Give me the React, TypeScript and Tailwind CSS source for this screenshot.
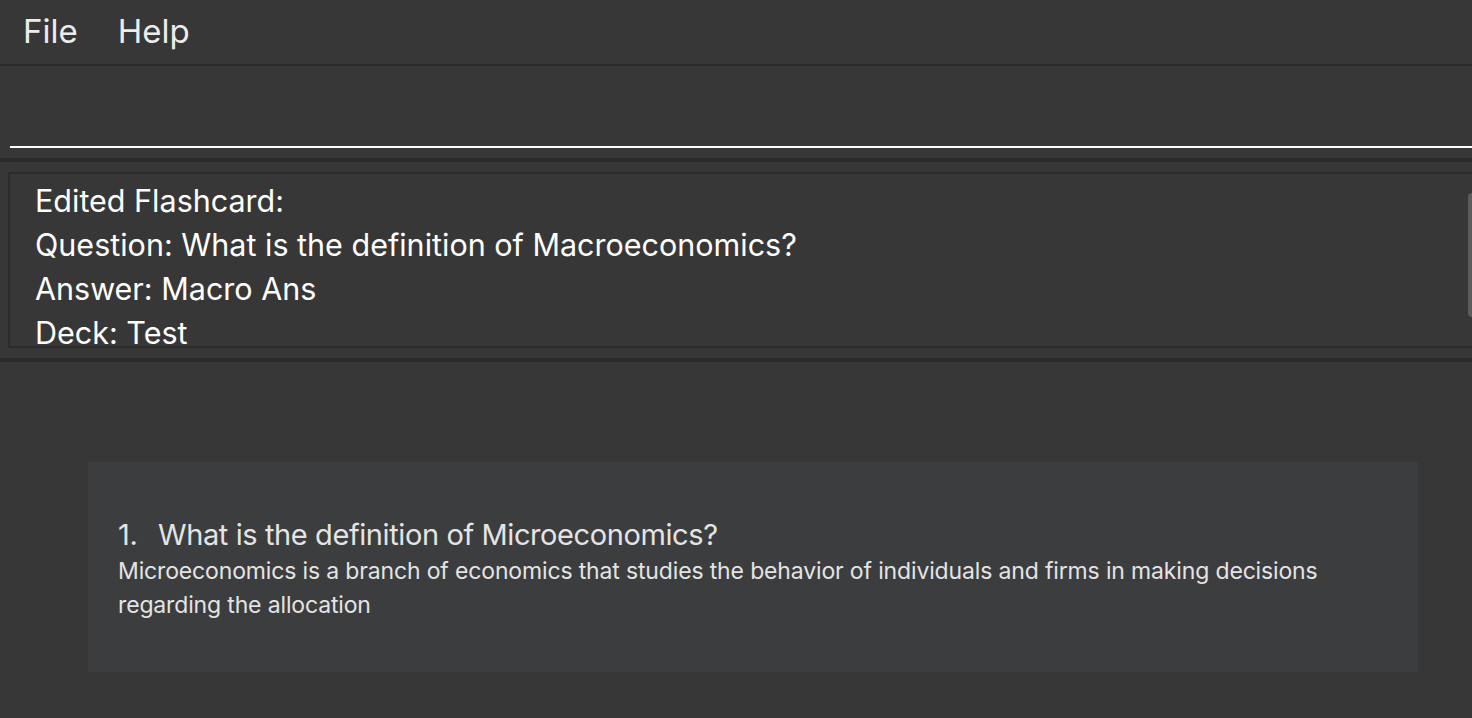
import React from "react";

const resultLines = [
  "Edited Flashcard:",
  "Question: What is the definition of Macroeconomics?",
  "Answer: Macro Ans",
  "Deck: Test",
];

const App: React.FC = () => {
  return (
    <div className="w-[1472px] h-[718px] overflow-hidden bg-[#373737] font-['Inter','Liberation_Sans',sans-serif] text-white flex flex-col">
      {/* menu bar */}
      <div className="h-16 flex items-center pl-[23px] gap-[40px] text-[33px] text-[#ececec]">
        <span>File</span>
        <span>Help</span>
      </div>
      <div className="h-[2px] bg-[#2b2b2b]" />

      {/* command box */}
      <div className="h-[92px] pl-[10px] pb-[10px] flex flex-col">
        <div className="flex-1 border-b-2 border-white" />
      </div>
      <div className="h-1 bg-[#2b2b2b]" />

      {/* result display */}
      <div className="relative h-[196px] pl-[8px] pt-[10px] pb-[10px]">
        <div className="h-full -mr-4 border-2 border-[#2b2b2b] overflow-hidden pl-[25px] pt-[5px]">
          {resultLines.map((line) => (
            <div key={line} className="text-[30.5px] leading-[44px] whitespace-nowrap">
              {line}
            </div>
          ))}
        </div>
        <div className="absolute right-0 top-[31px] w-[4px] h-[124px] rounded-l-full bg-[#5c5c5c]" />
      </div>
      <div className="h-1 bg-[#2b2b2b]" />

      {/* flashcard list */}
      <div className="flex-1 pt-[100px] pl-[88px] pr-[54px]">
        <div className="h-[210px] bg-[#3c3d3f] pl-[30px] pt-[54px] text-[#e4e4e4]">
          <div className="flex text-[29px] leading-[37px] tracking-[-0.4px]">
            <span className="w-[40px]">1.</span>
            <span>What is the definition of Microeconomics?</span>
          </div>
          <div className="mt-[1px] text-[23px] leading-[34px] tracking-[-0.15px] pr-[80px]">
            Microeconomics is a branch of economics that studies the behavior of individuals and firms in making decisions regarding the allocation
          </div>
        </div>
      </div>
    </div>
  );
};

export default App;
